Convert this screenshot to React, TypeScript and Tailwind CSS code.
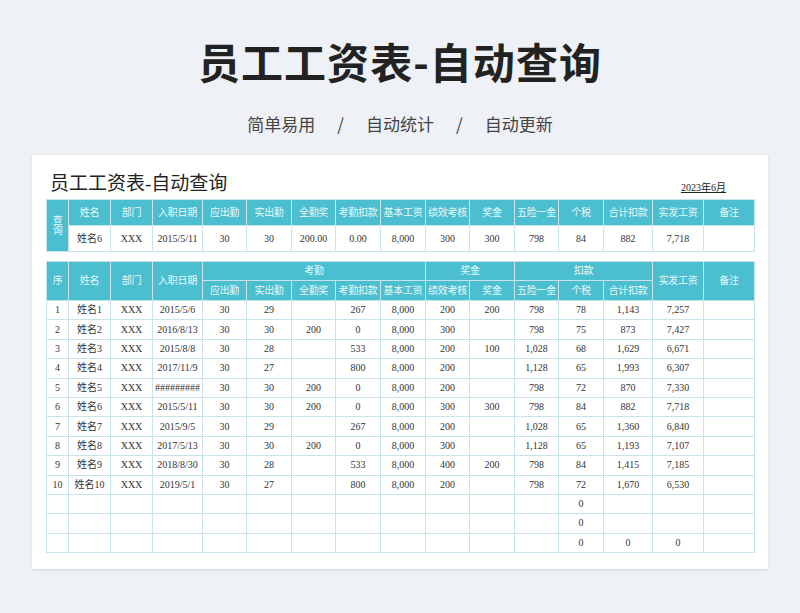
import React from 'react';

const widths = [22, 42, 42, 50, 44, 45, 44, 45, 45, 44, 45, 44, 45, 49, 51, 51];
const font = { fontFamily: '"Liberation Serif", "Noto Sans CJK SC", serif' };

const rows: string[][] = [
  ['1', '姓名1', 'XXX', '2015/5/6', '30', '29', '', '267', '8,000', '200', '200', '798', '78', '1,143', '7,257', ''],
  ['2', '姓名2', 'XXX', '2016/8/13', '30', '30', '200', '0', '8,000', '300', '', '798', '75', '873', '7,427', ''],
  ['3', '姓名3', 'XXX', '2015/8/8', '30', '28', '', '533', '8,000', '200', '100', '1,028', '68', '1,629', '6,671', ''],
  ['4', '姓名4', 'XXX', '2017/11/9', '30', '27', '', '800', '8,000', '200', '', '1,128', '65', '1,993', '6,307', ''],
  ['5', '姓名5', 'XXX', '#########', '30', '30', '200', '0', '8,000', '200', '', '798', '72', '870', '7,330', ''],
  ['6', '姓名6', 'XXX', '2015/5/11', '30', '30', '200', '0', '8,000', '300', '300', '798', '84', '882', '7,718', ''],
  ['7', '姓名7', 'XXX', '2015/9/5', '30', '29', '', '267', '8,000', '200', '', '1,028', '65', '1,360', '6,840', ''],
  ['8', '姓名8', 'XXX', '2017/5/13', '30', '30', '200', '0', '8,000', '300', '', '1,128', '65', '1,193', '7,107', ''],
  ['9', '姓名9', 'XXX', '2018/8/30', '30', '28', '', '533', '8,000', '400', '200', '798', '84', '1,415', '7,185', ''],
  ['10', '姓名10', 'XXX', '2019/5/1', '30', '27', '', '800', '8,000', '200', '', '798', '72', '1,670', '6,530', ''],
  ['', '', '', '', '', '', '', '', '', '', '', '', '0', '', '', ''],
  ['', '', '', '', '', '', '', '', '', '', '', '', '0', '', '', ''],
  ['', '', '', '', '', '', '', '', '', '', '', '', '0', '0', '0', ''],
];

const th = 'bg-[#4bbecf] text-[#eafafc] font-normal border border-[#c9e3ea] text-[10px] leading-none p-0 whitespace-nowrap overflow-hidden tracking-[-0.3px]';
const td = 'border border-[#c9e3ea] text-[10px] leading-none text-[#333] text-center p-0 h-[19.4px] whitespace-nowrap overflow-hidden';

function Cols() {
  return (
    <colgroup>
      {widths.map((w, i) => <col key={i} style={{ width: w }} />)}
    </colgroup>
  );
}

export default function App() {
  const sub = ['应出勤', '实出勤', '全勤奖', '考勤扣款', '基本工资', '绩效考核', '奖金', '五险一金', '个税', '合计扣款'];
  return (
    <div className="w-[800px] h-[613px] bg-[#eef1f5] flex flex-col items-center overflow-hidden" style={{ fontFamily: '"Noto Sans CJK SC", sans-serif' }}>
      <h1 className="mt-[36px] text-[42px] leading-[50px] font-bold text-[#222] tracking-wide">员工工资表-自动查询</h1>
      <div className="mt-[26px] flex items-center gap-[22px] text-[17px] leading-[24px] text-[#444]">
        <span>简单易用</span><span>/</span><span>自动统计</span><span>/</span><span>自动更新</span>
      </div>
      <div className="mt-[19px] w-[736px] h-[414px] bg-white shadow-sm px-[14px] text-center overflow-hidden" style={font}>
        <div className="flex items-end justify-between h-[44px] pb-[6px]">
          <span className="text-[19px] leading-none text-[#222] ml-[4px]">员工工资表-自动查询</span>
          <span className="text-[10px] leading-none underline text-[#222] mr-[28px]">2023年6月</span>
        </div>
        <table className="table-fixed border-collapse w-[708px]">
          <Cols />
          <tbody>
            <tr className="h-[26px]">
              <th rowSpan={2} className={th + ' leading-[14px]'}>查<br />询</th>
              {['姓名', '部门', '入职日期', ...sub, '实发工资', '备注'].map((t, i) => <th key={i} className={th}>{t}</th>)}
            </tr>
            <tr className="h-[26px]">
              {['姓名6', 'XXX', '2015/5/11', '30', '30', '200.00', '0.00', '8,000', '300', '300', '798', '84', '882', '7,718', ''].map((t, i) => (
                <td key={i} className={td}>{t}</td>
              ))}
            </tr>
          </tbody>
        </table>
        <table className="table-fixed border-collapse w-[708px] mt-[9px]">
          <Cols />
          <thead>
            <tr className="h-[19px]">
              {['序', '姓名', '部门', '入职日期'].map((t) => <th key={t} rowSpan={2} className={th}>{t}</th>)}
              <th colSpan={5} className={th}>考勤</th>
              <th colSpan={2} className={th}>奖金</th>
              <th colSpan={3} className={th}>扣款</th>
              <th rowSpan={2} className={th}>实发工资</th>
              <th rowSpan={2} className={th}>备注</th>
            </tr>
            <tr className="h-[20px]">
              {sub.map((t) => <th key={t} className={th}>{t}</th>)}
            </tr>
          </thead>
          <tbody>
            {rows.map((r, i) => (
              <tr key={i} className="h-[19.4px]">
                {r.map((c, j) => <td key={j} className={td}>{c}</td>)}
              </tr>
            ))}
          </tbody>
        </table>
      </div>
    </div>
  );
}
